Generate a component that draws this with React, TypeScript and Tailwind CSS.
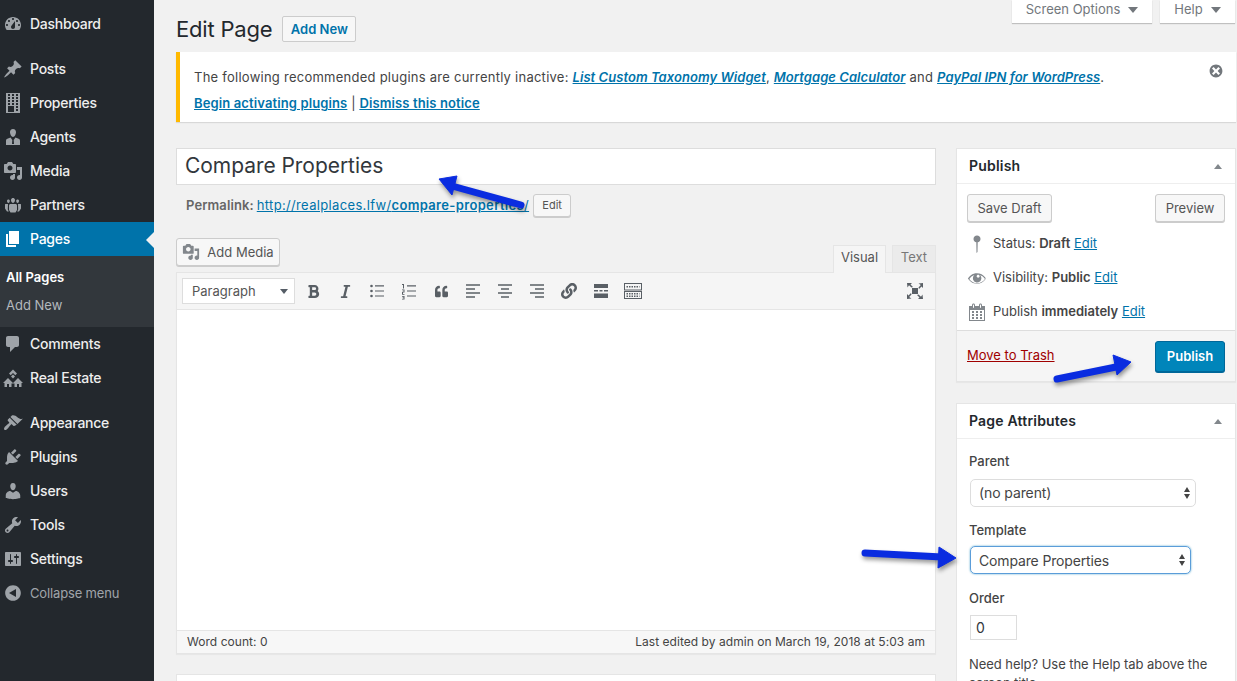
import type { ReactNode } from 'react';
import { FaBold, FaItalic, FaLink, FaQuoteLeft } from 'react-icons/fa';

const dash = {
  dashboard:
    'M3.76 16h12.48c1.1-1.37 1.76-3.11 1.76-5 0-4.42-3.58-8-8-8s-8 3.58-8 8c0 1.89.66 3.63 1.76 5zM10 4c.55 0 1 .45 1 1s-.45 1-1 1-1-.45-1-1 .45-1 1-1zM6 6c.55 0 1 .45 1 1s-.45 1-1 1-1-.45-1-1 .45-1 1-1zm8 0c.55 0 1 .45 1 1s-.45 1-1 1-1-.45-1-1 .45-1 1-1zm-5.37 5.55L12 7v6c0 1.1-.9 2-2 2s-2-.9-2-2c0-.57.24-1.08.63-1.45zM4 10c.55 0 1 .45 1 1s-.45 1-1 1-1-.45-1-1 .45-1 1-1zm12 0c.55 0 1 .45 1 1s-.45 1-1 1-1-.45-1-1 .45-1 1-1z',
  pin: 'M10.44 3.02l1.82-1.82 6.36 6.35-1.83 1.82c-1.05-.68-2.48-.57-3.41.36l-.75.75c-.92.93-1.04 2.35-.35 3.41l-1.83 1.82-2.41-2.41-2.8 2.79c-.42.42-3.38 2.71-3.8 2.29s1.86-3.39 2.28-3.81l2.79-2.79L4.1 9.36l1.83-1.82c1.05.69 2.48.57 3.4-.36l.75-.75c.93-.92 1.05-2.35.36-3.41z',
  building:
    'M3 20h14V0H3v20zM7 3H5V1h2v2zm4 0H9V1h2v2zm4 0h-2V1h2v2zM7 6H5V4h2v2zm4 0H9V4h2v2zm4 0h-2V4h2v2zM7 9H5V7h2v2zm4 0H9V7h2v2zm4 0h-2V7h2v2zm-8 3H5v-2h2v2zm4 0H9v-2h2v2zm4 0h-2v-2h2v2zm-4 7H5v-6h6v6zm4-4h-2v-2h2v2zm0 3h-2v-2h2v2z',
  businessman:
    'M10 2c2 0 3.2 1.5 3 3.6C12.800 7.800 11.700 10 10 10S7.200 7.800 7 5.600C6.800 3.500 8 2 10 2zM7.500 10.500L9.300 13 9 17h2l-.3-4 1.800-2.500 3.100 1.200c.9.4 1.400 1.200 1.400 2.100V18H3v-4.200c0-.9.5-1.700 1.400-2.100z',
  media:
    'M13 11V4c0-.55-.45-1-1-1h-1.670L9 1H5L3.670 3H2c-.55 0-1 .45-1 1v7c0 .55.45 1 1 1h10c.55 0 1-.45 1-1zM7 4.500c1.380 0 2.500 1.120 2.500 2.500S8.380 9.500 7 9.500 4.500 8.380 4.500 7 5.620 4.500 7 4.500zM14 6h5v10.500c0 1.380-1.120 2.500-2.500 2.500S14 17.880 14 16.500s1.120-2.500 2.500-2.500c.17 0 .34.02.5.05V9h-3V6zm-4 8.050V13h2v3.500c0 1.380-1.120 2.500-2.500 2.500S7 17.880 7 16.500 8.120 14 9.500 14c.17 0 .34.02.5.05z',
  groups:
    'M8.030 4.460c-.29 1.280.55 3.460 1.970 3.460 1.410 0 2.250-2.180 1.960-3.460-.22-.98-1.080-1.560-1.960-1.560-.890 0-1.750.58-1.970 1.560zM4 5.500c-.2.900.4 2.500 1.400 2.500S7 6.400 6.800 5.500C6.600 4.800 6 4.400 5.400 4.400S4.200 4.800 4 5.500zm9.200 0c-.2.900.4 2.500 1.400 2.500s1.600-1.600 1.400-2.500c-.2-.7-.8-1.100-1.400-1.100s-1.200.4-1.400 1.100zM7.500 9h5c.9 0 1.500.7 1.500 1.500v4.500l-1.500 2.500h-5L6 15v-4.500C6 9.700 6.600 9 7.500 9zM2.500 9H5l-.2 5.500 1 2H4L2 13.500V10.500C2 9.700 2 9 2.500 9zM15 9h2.500c.5 0 .5.7.5 1.500v3L16 16.500h-1.800l1-2z',
  page: 'M6 15V2h10v13H6zm-1 1h8v2H3V5h2v11z',
  comments: 'M5 2h9c1.100 0 2 .9 2 2v7c0 1.100-.9 2-2 2h-2l-5 5v-5H5c-1.100 0-2-.9-2-2V4c0-1.100.9-2 2-2z',
  appearance:
    'M14.480 11.060L7.410 3.990l1.500-1.500c.5-.56 2.300-.47 3.510.32 1.210.8 1.430 1.280 2.910 2.100 1.180.64 2.450 1.260 4.450.85zm-.71.71L6.700 4.700 4.930 6.470c-.39.39-.39 1.020 0 1.410l1.060 1.060c.39.39.39 1.030 0 1.420-.6.6-1.430 1.110-2.210 1.690-.35.26-.7.53-1.010.84C1.430 13.770.4 15.750 1.400 16.750s2.520-.53 3.870-1.870c.31-.31.58-.66.84-1.010.58-.78 1.090-1.610 1.690-2.210.39-.39 1.030-.39 1.420 0l1.060 1.060c.39.39 1.020.39 1.410 0z',
  plugins:
    'M13.110 4.360L9.870 7.600 8 5.730l3.240-3.240c.35-.34 1.050-.2 1.560.32.52.51.66 1.210.31 1.550zm-8 1.770l.91-1.120 9.010 9.010-1.190.84c-.71.71-2.630 1.160-3.820 1.160H6.140L4.900 17.260c-.59.59-1.540.59-2.120 0-.59-.58-.59-1.530 0-2.120l1.240-1.240v-3.880c0-1.130.4-3.190 1.090-3.890zm7.260 3.970l3.240-3.240c.34-.35 1.040-.21 1.550.31.52.51.66 1.210.31 1.550l-3.240 3.250z',
  users:
    'M10 9.250c-2.270 0-2.730-3.440-2.730-3.440C7 4.020 7.820 2 9.970 2c2.160 0 2.980 2.020 2.710 3.810 0 0-.41 3.440-2.680 3.440zm0 2.570L12.720 10c2.390 0 4.520 2.330 4.520 4.530v2.490s-3.650 1.130-7.240 1.130c-3.650 0-7.240-1.130-7.240-1.130v-2.490c0-2.250 1.940-4.480 4.470-4.480z',
  tools:
    'M16.680 9.770c-1.340 1.340-3.300 1.670-4.950.99l-5.410 6.520c-.99.99-2.590.99-3.580 0s-.99-2.590 0-3.570l6.520-5.420c-.68-1.650-.35-3.610.99-4.950 1.280-1.280 3.120-1.620 4.720-1.060l-2.890 2.890 2.820 2.820 2.860-2.870c.53 1.580.18 3.390-1.080 4.650zM3.810 16.210c.4.39 1.040.39 1.430 0 .4-.4.4-1.040 0-1.430-.39-.4-1.030-.4-1.430 0-.39.39-.39 1.030 0 1.430z',
  settings:
    'M18 16V4c0-.55-.45-1-1-1H3c-.55 0-1 .45-1 1v12c0 .55.45 1 1 1h14c.55 0 1-.45 1-1zM8 11h1c.55 0 1 .45 1 1s-.45 1-1 1H8v1.500c0 .28-.22.5-.5.5s-.5-.22-.5-.5V13H6c-.55 0-1-.45-1-1s.45-1 1-1h1V5.500c0-.28.22-.5.5-.5s.5.22.5.5V11zm5-2h-1c-.55 0-1-.45-1-1s.45-1 1-1h1V5.500c0-.28.22-.5.5-.5s.5.22.5.5V7h1c.55 0 1 .45 1 1s-.45 1-1 1h-1v5.500c0 .28-.22.5-.5.5s-.5-.22-.5-.5V9z',
  collapse:
    'M10 2.160c4.330 0 7.840 3.510 7.840 7.840s-3.510 7.840-7.840 7.840S2.160 14.330 2.160 10 5.670 2.160 10 2.160zm3 11.840V6l-7 4z',
  realEstate:
    'M10 1.500L14 5.500 12.300 7.200 10 5 7.700 7.200 6 5.500zM10 6.500L12 8.500 10 10.500 8 8.500zM0 15L5 10 10 15 15 10 20 15H18.500V19H16V16H14V19H11.500V15.500H8.500V19H6V16H4V19H1.500V15z',
  eye: 'M18.300 9.500C15 4.900 8.500 3.800 3.900 7.200c-1.200.9-2.200 2.100-3 3.300.8 1.200 1.900 2.400 3 3.200 4.600 3.400 11.100 2.300 14.400-2.300.4-.5.4-1.300 0-1.900zM10.100 7.200c.6-.6 1.500-.6 2.100 0 .6.6.6 1.500 0 2.100-.6.6-1.500.6-2.100 0-.6-.6-.6-1.500 0-2.100zm-.1 8c-3.100 0-6-1.600-7.700-4.200C3.500 9 5.300 7.600 7.400 6.900c-1.800 1.500-2 4.200-.5 6s4.200 2 6 .5 2-4.200.5-6c-.2-.2-.3-.4-.5-.5 2.100.7 3.900 2.100 5.100 4.100-1.700 2.600-4.600 4.200-8 4.200z',
  calendar:
    'M15 4h3v15H2V4h3V3c0-.41.15-.76.44-1.060.29-.29.65-.44 1.060-.44s.77.15 1.060.44c.29.3.44.65.44 1.060v1h4V3c0-.41.15-.76.44-1.060.29-.29.65-.44 1.060-.44s.77.15 1.060.44c.29.3.44.65.44 1.060v1zM6 3v2.500c0 .14.05.26.15.36.09.09.21.14.35.14s.26-.05.35-.14c.1-.1.15-.22.15-.36V3c0-.14-.05-.26-.15-.36-.09-.09-.21-.14-.35-.14s-.26.05-.35.14c-.1.1-.15.22-.15.36zm7 0v2.500c0 .14.05.26.14.36.1.09.22.14.36.14s.26-.05.36-.14c.09-.1.14-.22.14-.36V3c0-.14-.05-.26-.14-.36-.1-.09-.22-.14-.36-.14s-.26.05-.36.14c-.09.1-.14.22-.14.36zm4 15V8H3v10h14zM7 9v2H5V9h2zm2 0h2v2H9V9zm4 2V9h2v2h-2zm-6 1v2H5v-2h2zm2 0h2v2H9v-2zm4 2v-2h2v2h-2zm-6 1v2H5v-2h2zm4 2H9v-2h2v2zm4 0h-2v-2h2v2z',
  statusPin:
    'M10 1.500c2 0 3.500 1.500 3.500 3.400 0 1.700-1.300 3.100-2.800 3.400l-.2 9.700-1 1-.2-10.700C7.800 8 6.500 6.600 6.500 4.900c0-1.900 1.500-3.400 3.500-3.400z',
  dismiss:
    'M10 2c4.420 0 8 3.580 8 8s-3.580 8-8 8-8-3.580-8-8 3.580-8 8-8zm5 11l-3-3 3-3-2-2-3 3-3-3-2 2 3 3-3 3 2 2 3-3 3 3z',
};

function Dash({ d, className }: { d: string; className?: string }) {
  return (
    <svg viewBox="0 0 20 20" fill="currentColor" className={className}>
      <path d={d} />
    </svg>
  );
}

const topGroup = [
  { label: 'Posts', icon: dash.pin },
  { label: 'Properties', icon: dash.building },
  { label: 'Agents', icon: dash.businessman },
  { label: 'Media', icon: dash.media },
  { label: 'Partners', icon: dash.groups },
];

const lowerGroup = [
  { label: 'Appearance', icon: dash.appearance },
  { label: 'Plugins', icon: dash.plugins },
  { label: 'Users', icon: dash.users },
  { label: 'Tools', icon: dash.tools },
  { label: 'Settings', icon: dash.settings },
];

function MenuItem({ label, icon, active }: { label: string; icon: string; active?: boolean }) {
  return (
    <div
      className={`relative flex h-[34px] items-center text-[14px] font-medium tracking-[-0.25px] ${
        active ? 'bg-[#0073aa] text-white' : 'text-[#eeeeee]'
      }`}
    >
      <div className="flex w-[30px] shrink-0 justify-center pr-[6px] pl-[2px]">
        <Dash d={icon} className={`h-[20px] w-[20px] ${active ? 'text-white' : 'text-[#9ea3a8]'}`} />
      </div>
      <span className="pb-[2px]">{label}</span>
      {active && (
        <div className="absolute top-[10px] right-0 h-0 w-0 border-y-[8px] border-r-[8px] border-y-transparent border-r-[#f1f1f1]" />
      )}
    </div>
  );
}

function Sidebar() {
  return (
    <aside className="flex h-full w-[154px] shrink-0 flex-col bg-[#23282d] pt-[7px]">
      <MenuItem label="Dashboard" icon={dash.dashboard} />
      <div className="h-[11px]" />
      {topGroup.map((m) => (
        <MenuItem key={m.label} {...m} />
      ))}
      <MenuItem label="Pages" icon={dash.page} active />
      <div className="flex h-[71px] flex-col bg-[#32373c] pt-[8px] text-[13px]">
        <div className="flex h-[28px] items-center pl-[6px] font-semibold text-white">All Pages</div>
        <div className="flex h-[28px] items-center pl-[6px] text-[#b4b9be]">Add New</div>
      </div>
      <MenuItem label="Comments" icon={dash.comments} />
      <MenuItem label="Real Estate" icon={dash.realEstate} />
      <div className="h-[11px]" />
      {lowerGroup.map((m) => (
        <MenuItem key={m.label} {...m} />
      ))}
      <div className="flex h-[34px] items-center text-[13px] tracking-[-0.15px] text-[#a0a5aa]">
        <div className="flex w-[30px] shrink-0 justify-center pr-[6px] pl-[2px]">
          <Dash d={dash.collapse} className="h-[20px] w-[20px] text-[#9ea3a8]" />
        </div>
        <span className="pt-[2px]">Collapse menu</span>
      </div>
    </aside>
  );
}

function Caret({ className }: { className?: string }) {
  return <div className={`h-0 w-0 border-x-[5px] border-x-transparent ${className ?? ''}`} />;
}

function Btn({ children, className }: { children: ReactNode; className?: string }) {
  return (
    <div
      className={`flex items-center justify-center rounded-[3px] border border-[#cccccc] bg-[#f7f7f7] text-[#555555] shadow-[0_1px_0_#cccccc] ${className ?? ''}`}
    >
      {children}
    </div>
  );
}

function Link({ children, className }: { children: ReactNode; className?: string }) {
  return <span className={`text-[#0073aa] underline ${className ?? ''}`}>{children}</span>;
}

function Lines({ kind }: { kind: 'left' | 'center' | 'right' }) {
  const rows =
    kind === 'left'
      ? ['M3 4h14', 'M3 8h9', 'M3 12h14', 'M3 16h9']
      : kind === 'center'
        ? ['M3 4h14', 'M6 8h8', 'M3 12h14', 'M6 16h8']
        : ['M3 4h14', 'M8 8h9', 'M3 12h14', 'M8 16h9'];
  return (
    <svg viewBox="0 0 20 20" className="h-[20px] w-[20px] text-[#595f65]" stroke="currentColor" strokeWidth="1.5">
      {rows.map((d) => (
        <path key={d} d={d} />
      ))}
    </svg>
  );
}

function Toolbar() {
  return (
    <div className="flex h-[37px] items-center border-b border-[#e5e5e5] bg-[#f5f5f5] pl-[5px] text-[#595f65]">
      <div className="flex h-[26px] w-[113px] items-center justify-between border border-[#dddddd] bg-white pr-[6px] pl-[9px] text-[13px] text-[#555555]">
        <span className="pt-[2px]">Paragraph</span>
        <div className="h-0 w-0 border-x-[4px] border-t-[5px] border-x-transparent border-t-[#555d66]" />
      </div>
      <div className="ml-[2px] flex items-center">
        <div className="flex w-[32px] justify-center">
          <FaBold className="h-[15px] w-[13px]" />
        </div>
        <div className="flex w-[32px] justify-center">
          <FaItalic className="h-[15px] w-[13px]" />
        </div>
        <div className="flex w-[32px] justify-center">
          <svg viewBox="0 0 20 20" className="h-[20px] w-[20px]" fill="currentColor">
            <circle cx="4.500" cy="5" r="1.300" />
            <circle cx="4.500" cy="10" r="1.300" />
            <circle cx="4.500" cy="15" r="1.300" />
            <path d="M8 4.300h9v1.200H8zM8 9.400h9v1.200H8zM8 14.400h9v1.200H8z" />
          </svg>
        </div>
        <div className="flex w-[32px] justify-center">
          <svg viewBox="0 0 20 20" className="h-[20px] w-[20px]" fill="currentColor">
            <path d="M3 3h2v4.500H4V4H3zM3 8.500h2.500v3H4V13h1.500v.8H3v-3h1.500V9.300H3zM3 15h2.500v3.500H3v-.7h1.500v-.7H3.500v-.7h1V15.700H3z" />
            <path d="M8 4.300h9v1.200H8zM8 9.400h9v1.200H8zM8 14.400h9v1.200H8z" />
          </svg>
        </div>
        <div className="flex w-[32px] justify-center">
          <FaQuoteLeft className="h-[13px] w-[15px]" />
        </div>
        <div className="flex w-[32px] justify-center">
          <Lines kind="left" />
        </div>
        <div className="flex w-[32px] justify-center">
          <Lines kind="center" />
        </div>
        <div className="flex w-[32px] justify-center">
          <Lines kind="right" />
        </div>
        <div className="flex w-[32px] justify-center">
          <FaLink className="h-[16px] w-[16px]" />
        </div>
        <div className="flex w-[32px] justify-center">
          <svg viewBox="0 0 20 20" className="h-[20px] w-[20px]" fill="currentColor">
            <path d="M3 3h14v4H3zM3 9h4v1.500H3zM8.500 9h3v1.500h-3zM13 9h4v1.500h-4zM3 12.500h14V17H3z" />
          </svg>
        </div>
        <div className="flex w-[32px] justify-center">
          <svg viewBox="0 0 20 20" className="h-[20px] w-[20px]" fill="none" stroke="currentColor" strokeWidth="1">
            <rect x="1.500" y="2.500" width="17" height="6.500" />
            <rect x="1.500" y="10.500" width="17" height="7" />
            <path d="M3.500 5.700h13M3.500 12.800h13M3.500 15.200h13" strokeWidth="1.500" strokeDasharray="1.500 1" />
          </svg>
        </div>
      </div>
      <div className="ml-auto flex w-[40px] justify-center">
        <svg viewBox="0 0 20 20" className="h-[20px] w-[20px]" fill="currentColor">
          <path d="M2 2h5L5.500 3.500 8 6l-1.500.5L4 4.200 2.500 6.500zM18 2v5l-1.500-1.500L14 8l-.5-1.500L15.800 4 13.500 2.500zM2 18v-5l1.500 1.500L6 12l.5 1.500L4.200 16l2.300 1.500zM18 18h-5l1.500-1.500L12 14l1.500-.5L16 15.800l1.500-2.300zM7 7h6v6H7z" />
        </svg>
      </div>
    </div>
  );
}

function Editor() {
  return (
    <div>
      <div className="flex items-end justify-between">
        <Btn className="mb-[6px] h-[28px] w-[104px] gap-[7px] text-[13px]">
          <Dash d={dash.media} className="h-[18px] w-[18px] text-[#82878c]" />
          <span className="pt-[2px]">Add Media</span>
        </Btn>
        <div className="relative top-px z-10 flex text-[13px]">
          <div className="flex h-[28px] w-[53px] items-center justify-center border border-b-0 border-[#e5e5e5] bg-[#f5f5f5] pb-[3px] text-[#555555]">
            Visual
          </div>
          <div className="ml-[6px] flex h-[28px] w-[44px] items-center justify-center border border-[#e5e5e5] bg-[#ebebeb] pb-[2px] text-[#777777]">
            Text
          </div>
        </div>
      </div>
      <div className="border border-[#e5e5e5] bg-white shadow-[0_1px_1px_rgba(0,0,0,0.04)]">
        <Toolbar />
        <div className="h-[320px]" />
        <div className="flex h-[23px] items-center justify-between border-t border-[#e5e5e5] bg-[#f7f7f7] px-[10px] text-[12px] tracking-[0.04px] text-[#444444]">
          <span>Word count: 0</span>
          <span>Last edited by admin on March 19, 2018 at 5:03 am</span>
        </div>
      </div>
      <div className="mt-[20px] h-[40px] border border-[#e5e5e5] bg-white" />
    </div>
  );
}

function BoxHeader({ title }: { title: string }) {
  return (
    <div className="flex h-[35px] items-center justify-between border-b border-[#eeeeee] pr-[13px] pl-[12px]">
      <span className="pb-[2px] text-[14px] font-semibold tracking-[0.2px] text-[#23282d]">{title}</span>
      <div className="h-0 w-0 border-x-[4px] border-b-[5px] border-x-transparent border-b-[#82878c]" />
    </div>
  );
}

function PublishBox() {
  return (
    <div className="border border-[#e5e5e5] bg-white shadow-[0_1px_1px_rgba(0,0,0,0.04)]">
      <BoxHeader title="Publish" />
      <div className="flex justify-between px-[10px] pt-[10px]">
        <Btn className="h-[28px] w-[85px] pt-[2px] text-[13px]">Save Draft</Btn>
        <Btn className="h-[28px] w-[70px] pt-[2px] text-[13px]">Preview</Btn>
      </div>
      <div className="flex flex-col pt-[5px] pl-[10px] text-[13px] text-[#444444]">
        <div className="flex h-[34px] items-center gap-[6px]">
          <Dash d={dash.statusPin} className="h-[20px] w-[20px] text-[#82878c]" />
          <span>
            Status: <b className="font-semibold">Draft</b> <Link>Edit</Link>
          </span>
        </div>
        <div className="flex h-[34px] items-center gap-[6px]">
          <Dash d={dash.eye} className="h-[20px] w-[20px] text-[#82878c]" />
          <span>
            Visibility: <b className="font-semibold">Public</b> <Link>Edit</Link>
          </span>
        </div>
        <div className="flex h-[34px] items-center gap-[6px]">
          <Dash d={dash.calendar} className="h-[20px] w-[20px] text-[#82878c]" />
          <span>
            Publish <b className="font-semibold">immediately</b> <Link>Edit</Link>
          </span>
        </div>
      </div>
      <div className="mt-px flex h-[51px] items-center justify-between border-t border-[#dddddd] bg-[#f5f5f5] pr-[10px] pl-[10px]">
        <span className="text-[13px] text-[#a00000] underline">Move to Trash</span>
        <div className="flex h-[31px] w-[70px] items-center justify-center rounded-[3px] border border-[#006799] bg-[#0085ba] pt-[2px] text-[13px] font-semibold text-white shadow-[0_1px_0_#006799]">
          Publish
        </div>
      </div>
    </div>
  );
}

function SelectArrows() {
  return (
    <svg viewBox="0 0 8 14" className="pointer-events-none absolute top-[6px] right-[4px] h-[14px] w-[8px] text-[#444444]" fill="currentColor">
      <path d="M4 1l3 5H1zM4 13L1 8h6z" />
    </svg>
  );
}

function AttributesBox() {
  return (
    <div className="border border-[#e5e5e5] bg-white">
      <BoxHeader title="Page Attributes" />
      <div className="px-[12px] text-[13px] text-[#444444]">
        <div className="mt-[13px] font-medium">Parent</div>
        <div className="relative mt-[7px] ml-px flex h-[28px] w-[226px] items-center rounded-[5px] border border-[#dddddd] pl-[8px] text-[14px] tracking-[-0.1px]">
          (no parent)
          <SelectArrows />
        </div>
        <div className="mt-[14px] font-medium">Template</div>
        <div className="relative mt-[6px] ml-px flex h-[28px] w-[221px] items-center rounded-[5px] border border-[#5b9dd9] pl-[8px] text-[14px] tracking-[-0.15px] shadow-[0_0_2px_rgba(30,140,190,0.8)]">
          Compare Properties
          <SelectArrows />
        </div>
        <div className="mt-[15px] font-medium">Order</div>
        <div className="mt-[6px] ml-px flex h-[25px] w-[47px] items-center border border-[#dddddd] pl-[5px] text-[14px] text-[#32373c]">
          0
        </div>
        <p className="mt-[15px] leading-[19px] tracking-[-0.05px]">Need help? Use the Help tab above the screen title.</p>
      </div>
    </div>
  );
}

function Arrows() {
  return (
    <svg
      viewBox="0 0 1237 681"
      className="pointer-events-none absolute inset-0 h-[681px] w-[1237px] text-[#0a2ce0] drop-shadow-[1px_3px_2px_rgba(0,0,0,0.4)]"
      fill="currentColor"
      stroke="currentColor"
    >
      <path d="M452 186L521 205" strokeWidth="7" strokeLinecap="round" />
      <path d="M439 179L457 176L452 195Z" strokeWidth="1" strokeLinejoin="round" />
      <path d="M1057 379L1116 367" strokeWidth="7" strokeLinecap="round" />
      <path d="M1131 362L1113 355L1117 375Z" strokeWidth="1" strokeLinejoin="round" />
      <path d="M865 553L942 557" strokeWidth="7" strokeLinecap="round" />
      <path d="M956 558L939 547L938 568Z" strokeWidth="1" strokeLinejoin="round" />
    </svg>
  );
}

export default function App() {
  return (
    <div className="relative flex h-[681px] w-[1237px] overflow-hidden bg-[#f1f1f1] font-['Inter','Liberation_Sans',sans-serif] text-[13px] text-[#444444]">
      <Sidebar />
      <main className="min-w-0 flex-1 pr-px pl-[22px]">
        <div className="flex h-[52px] items-start justify-between">
          <div className="flex items-center pt-[16px]">
            <h1 className="text-[22px] leading-[26px] tracking-[-0.2px] text-[#23282d]">Edit Page</h1>
            <div className="ml-[10px] flex h-[26px] w-[74px] items-center justify-center rounded-[2px] border border-[#cccccc] bg-[#f7f7f7] pt-[2px] text-[13px] font-semibold text-[#0073aa]">
              Add New
            </div>
          </div>
          <div className="flex gap-[8px] pr-px text-[13px] text-[#72777c]">
            <div className="flex h-[23px] w-[140px] items-center justify-center gap-[8px] bg-white pb-[4px] shadow-[0_1px_1px_rgba(0,0,0,0.2)]">
              Screen Options
              <Caret className="border-t-[6px] border-t-[#72777c]" />
            </div>
            <div className="flex h-[23px] w-[75px] items-center justify-center gap-[8px] bg-white pb-[4px] shadow-[0_1px_1px_rgba(0,0,0,0.2)]">
              Help
              <Caret className="border-t-[6px] border-t-[#72777c]" />
            </div>
          </div>
        </div>

        <div className="relative h-[70px] border-l-4 border-[#ffb900] bg-white pt-[16px] pl-[14px] shadow-[0_1px_1px_rgba(0,0,0,0.1)]">
          <p className="text-[13px] leading-[18px] tracking-[0.25px] text-[#444444]">
            The following recommended plugins are currently inactive:{' '}
            <Link className="font-semibold tracking-[0.05px] italic">List Custom Taxonomy Widget</Link>,{' '}
            <Link className="font-semibold tracking-[0.05px] italic">Mortgage Calculator</Link> and{' '}
            <Link className="font-semibold tracking-[0.05px] italic">PayPal IPN for WordPress</Link>.
          </p>
          <p className="mt-[8px] text-[13px] leading-[18px] tracking-[0.12px]">
            <Link className="font-semibold">Begin activating plugins</Link> | <Link className="font-semibold">Dismiss this notice</Link>
          </p>
          <Dash d={dash.dismiss} className="absolute top-[11px] right-[12px] h-[16px] w-[16px] text-[#72777c]" />
        </div>

        <div className="mt-[26px] flex gap-[20px]">
          <div className="w-[760px] shrink-0">
            <div className="flex h-[37px] items-center border border-[#dddddd] bg-white pb-[2px] pl-[8px] text-[21px] tracking-[-0.05px] text-[#32373c]">
              Compare Properties
            </div>
            <div className="mt-[9px] mb-[21px] flex h-[23px] items-center pl-[10px] text-[13px] text-[#666666]">
              <span className="font-semibold tracking-[0.1px]">Permalink:</span>
              <span className="ml-[3px] tracking-[0.34px] text-[#0073aa] underline">
                http://realplaces.lfw/<b className="font-semibold">compare-properties</b>/
              </span>
              <Btn className="ml-[4px] h-[23px] w-[38px] text-[11px]">Edit</Btn>
            </div>
            <Editor />
          </div>
          <div className="w-[280px] shrink-0">
            <PublishBox />
            <div className="mt-[21px]">
              <AttributesBox />
            </div>
          </div>
        </div>
      </main>
      <Arrows />
    </div>
  );
}
